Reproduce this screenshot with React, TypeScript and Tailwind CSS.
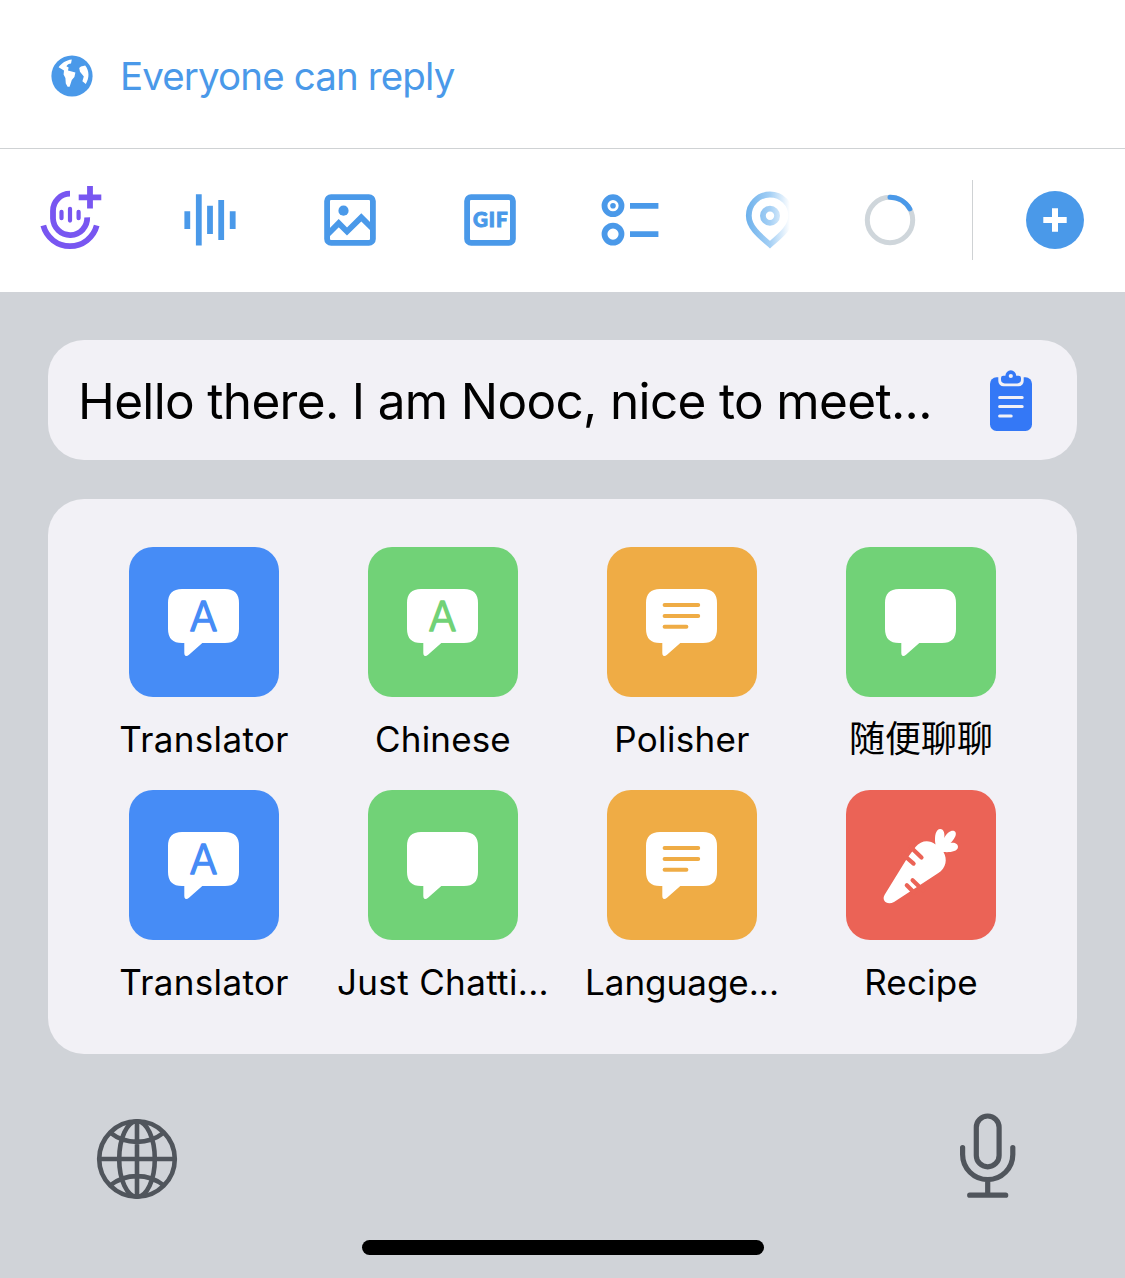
import type { ReactNode } from "react";

const BLUE = "#4A99E9";

function ToolIcon({ children }: { children: ReactNode }) {
  return (
    <svg width="80" height="80" viewBox="-40 -40 80 80" fill="none" stroke={BLUE} strokeWidth="5.8">
      {children}
    </svg>
  );
}

function EarthIcon() {
  return (
    <svg width="42" height="42" viewBox="0 0 42 42">
      <circle cx="21" cy="21" r="20.6" fill={BLUE} />
      <path
        fill="#fff"
        d="M7.6 12.2C10.5 8 15 5 20.8 4.4L20 8.4C18 8.6 16.2 9.4 15.4 11.2L17.6 12.6L17 15.4L24.4 17.6L23.4 22L20.8 25L18.6 31.8H16.6L14.8 28.6L14.4 23L12.6 19.4L13 15.6Z"
      />
      <path
        fill="#fff"
        d="M28.2 13L30 11.4L34.2 10.6C38.4 16 38.6 23 34.8 29L31.4 26.2L32.8 21.4L29 16.7Z"
      />
    </svg>
  );
}

function SpacesIcon() {
  return (
    <ToolIcon>
      <g stroke="#7856F1">
        <path d="M-26.7 5.6A27.6 27.6 0 0 0 26.7 5.6" />
        <path d="M0 -26.3A17 17 0 0 0 -17 -9.3V-1.5A17 17 0 0 0 17.2 -2.6" />
        <path d="M20 -34V-11.4M8.7 -22.7H31.3" />
        <path d="M-8.5 -8.2V-1.8M0 -11.2V0.6M8.6 -8.2V-1.8" strokeWidth="4.2" strokeLinecap="round" />
      </g>
    </ToolIcon>
  );
}

function WaveIcon() {
  return (
    <ToolIcon>
      <path d="M-22.7 -8.7V8.9M-11.2 -25.8V25.6M0 -14.2V14M11.2 -20V20M22.7 -8.7V8.9" />
    </ToolIcon>
  );
}

function ImageIcon() {
  return (
    <ToolIcon>
      <rect x="-22.9" y="-22.9" width="45.8" height="45.8" rx="4" />
      <circle cx="-6.5" cy="-9.3" r="5.1" fill={BLUE} stroke="none" />
      <path d="M-22 14L-11.3 3.2L-3 11.5L11.3 -2.6L22 8" />
    </ToolIcon>
  );
}

function GifIcon() {
  return (
    <ToolIcon>
      <rect x="-22.9" y="-22.9" width="45.8" height="45.8" rx="4" />
      <text
        x="-17"
        y="7.4"
        textLength="34.5"
        fill={BLUE}
        stroke={BLUE}
        strokeWidth="1"
        className="font-['Lato'] text-[20.5px] font-black"
      >
        GIF
      </text>
    </ToolIcon>
  );
}

function PollIcon() {
  return (
    <ToolIcon>
      <circle cx="-17" cy="-14.3" r="8.5" />
      <circle cx="-17" cy="-14.3" r="2.8" fill={BLUE} stroke="none" />
      <circle cx="-17" cy="14.1" r="8.5" />
      <path d="M0 -14.2H28.4M0 14.1H28.4" />
    </ToolIcon>
  );
}

function PinIcon() {
  return (
    <ToolIcon>
      <defs>
        <linearGradient id="pinFade" gradientUnits="userSpaceOnUse" x1="-24" y1="0" x2="20" y2="0">
          <stop offset="0" stopColor="#6DB1EC" />
          <stop offset="0.55" stopColor="#A5D0F5" />
          <stop offset="1" stopColor="#FFFFFF" />
        </linearGradient>
      </defs>
      <g stroke="url(#pinFade)">
        <path d="M0 24.6C-12 14.5 -21.2 6.5 -21.2 -4.3A21.2 21.2 0 0 1 21.2 -4.3C21.2 6.5 12 14.5 0 24.6Z" />
        <circle cx="0" cy="-4.3" r="7.1" />
      </g>
    </ToolIcon>
  );
}

function ProgressRing() {
  return (
    <ToolIcon>
      <circle r="22.7" stroke="#CFD6DB" strokeWidth="5" />
      <path d="M0 -22.7A22.7 22.7 0 0 1 19.8 -11.1" strokeWidth="5" strokeLinecap="round" />
    </ToolIcon>
  );
}

function ClipboardIcon() {
  return (
    <svg width="42" height="62" viewBox="0 0 42 62">
      <rect y="7.3" width="42" height="53.7" rx="6.5" fill="#3478F6" />
      <path d="M8.3 4H33.7V11A5.2 5.2 0 0 1 28.5 16.2H13.5A5.2 5.2 0 0 1 8.3 11Z" fill="#F2F1F6" />
      <path
        d="M13.2 5.7H15.4A5.4 5.4 0 0 1 26.2 5.7H28.6Q31 5.7 31 8.1V9.6Q31 13.4 27.2 13.4H14.8Q11 13.4 11 9.6V8.1Q11 5.7 13.2 5.7Z"
        fill="#3478F6"
      />
      <circle cx="20.8" cy="6" r="2.1" fill="#F2F1F6" />
      <path d="M9.6 27.4H32.2M9.6 36.5H32.2M9.6 46H21.2" stroke="#F2F1F6" strokeWidth="3" strokeLinecap="round" />
    </svg>
  );
}

function Bubble({ children }: { children?: ReactNode }) {
  return (
    <svg width="150" height="150" viewBox="0 0 150 150">
      <path
        fill="#fff"
        d="M53 42H96Q110 42 110 56V82Q110 96 96 96H73.3L60 107.8Q57.8 109.6 56.4 108.8Q55.3 108 55.3 106V96H53Q39 96 39 82V56Q39 42 53 42Z"
      />
      {children}
    </svg>
  );
}

function LetterBubble({ color }: { color: string }) {
  return (
    <Bubble>
      <text
        x="74.5"
        y="84.2"
        textAnchor="middle"
        fill={color}
        stroke={color}
        strokeWidth="1.5"
        strokeLinejoin="round"
        className="font-['Inter'] text-[41.5px] font-light"
      >
        A
      </text>
    </Bubble>
  );
}

function LinesBubble() {
  return (
    <Bubble>
      <path d="M57.6 58H91.2M57.6 69H91.2M57.6 79.8H79.4" stroke="#EFAC45" strokeWidth="4" strokeLinecap="round" />
    </Bubble>
  );
}

function CarrotIcon() {
  return (
    <svg width="150" height="150" viewBox="0 0 150 150">
      <path
        fill="#fff"
        d="M38.8 104.5L61 68.5L69.5 57C75 50.5 83 49.5 89.5 54.5C88 46 90 39 94.2 39C98 39 99 44 98.2 48C102 40.5 107.5 39.5 109.4 42C111 45 108 49.5 104.5 53C109 52.2 112 54 112 57C111.5 62 103 62.5 97.5 62C101.5 69 100.5 78 92 83.3L48 112C41 115.5 35 110.5 38.8 104.5Z"
      />
      <path
        d="M57 64.5L67.6 73.6M65 57.5L75.5 67.6M60.8 95.2L68 102.5M66.6 90.2L77 100.2"
        stroke="#EB6356"
        strokeWidth="4.2"
        strokeLinecap="round"
      />
    </svg>
  );
}

function GlobeIcon() {
  return (
    <svg width="82" height="82" viewBox="-41 -41 82 82" fill="none" stroke="#50555C" strokeWidth="4.6">
      <circle r="37.8" />
      <ellipse rx="17.8" ry="37.8" />
      <path d="M0 -38V38M-38 0H38M-27 -26.5A43.5 43.5 0 0 0 27 -26.5M-27 26.5A43.5 43.5 0 0 1 27 26.5" />
    </svg>
  );
}

function MicIcon() {
  return (
    <svg width="56" height="86" viewBox="-27.7 0 56 86" fill="none" stroke="#50555C" strokeWidth="5.2" strokeLinecap="round">
      <rect x="-11.4" y="3" width="22.8" height="50.8" rx="11.4" />
      <path d="M-25.1 34.5V41.5A25.1 25.1 0 0 0 25.1 41.5V34.5M0 67V82M-18 82.2H18" />
    </svg>
  );
}

const apps: { label: string; bg: string; icon: ReactNode; text: string }[] = [
  { label: "Translator", bg: "bg-[#468CF6]", icon: <LetterBubble color="#468CF6" />, text: "text-[35px] tracking-[0.35px]" },
  { label: "Chinese", bg: "bg-[#71D277]", icon: <LetterBubble color="#71D277" />, text: "text-[35px] tracking-[0.15px]" },
  { label: "Polisher", bg: "bg-[#EFAC45]", icon: <LinesBubble />, text: "text-[35px] tracking-[0.3px]" },
  { label: "随便聊聊", bg: "bg-[#71D277]", icon: <Bubble />, text: "text-[36px]" },
  { label: "Translator", bg: "bg-[#468CF6]", icon: <LetterBubble color="#468CF6" />, text: "text-[35px] tracking-[0.35px]" },
  { label: "Just Chatti...", bg: "bg-[#71D277]", icon: <Bubble />, text: "text-[35px] tracking-[0.35px]" },
  { label: "Language...", bg: "bg-[#EFAC45]", icon: <LinesBubble />, text: "text-[35px]" },
  { label: "Recipe", bg: "bg-[#EB6356]", icon: <CarrotIcon />, text: "text-[35px] tracking-[0.15px]" },
];

const tools = [SpacesIcon, WaveIcon, ImageIcon, GifIcon, PollIcon, PinIcon];

export default function App() {
  return (
    <div className="flex h-[1278px] w-[1125px] flex-col overflow-hidden bg-[#D0D3D8] font-['Inter','Noto_Sans_CJK_SC',sans-serif] text-black">
      <div className="flex h-[149px] items-center gap-[27px] border-b border-[#CFD2D4] bg-white pt-[4px] pl-[51px]">
        <EarthIcon />
        <span className="text-[38.5px] leading-[50px] tracking-[-0.87px] whitespace-nowrap text-[#4A99E9]">
          Everyone can reply
        </span>
      </div>
      <div className="flex h-[143px] items-center bg-white pb-[1px]">
        {tools.map((Icon, i) => (
          <div key={i} className="flex w-[140px] justify-center">
            <Icon />
          </div>
        ))}
        <div className="ml-[10px] w-[80px]">
          <ProgressRing />
        </div>
        <div className="ml-[42px] h-[80px] w-px bg-[#CFD2D4]" />
        <div className="ml-[53px] flex size-[58px] items-center justify-center rounded-full bg-[#4A99E9]">
          <svg width="24" height="24" viewBox="-12 -12 24 24" stroke="#fff" strokeWidth="6">
            <path d="M0 -11.7V11.7M-11.7 0H11.7" />
          </svg>
        </div>
      </div>
      <div className="mx-12 mt-12 flex h-[120px] items-center justify-between rounded-[36px] bg-[#F2F1F6] pt-[2px] pr-[45px] pl-[30px]">
        <span className="text-[49.5px] leading-[60px] tracking-[-0.66px] whitespace-nowrap">
          Hello there. I am Nooc, nice to meet...
        </span>
        <ClipboardIcon />
      </div>
      <div className="mx-12 mt-[39px] grid h-[555px] grid-cols-[repeat(4,239px)] grid-rows-[243px_243px] content-start justify-center rounded-[36px] bg-[#F2F1F6] pt-12">
        {apps.map((app, i) => (
          <div key={i} className="flex flex-col items-center">
            <div className={`size-[150px] overflow-hidden rounded-[24px] ${app.bg}`}>{app.icon}</div>
            <span className={`mt-[19px] leading-[46px] whitespace-nowrap ${app.text}`}>{app.label}</span>
          </div>
        ))}
      </div>
      <div className="mt-[59px] flex items-start justify-between pr-[109px] pl-[96px]">
        <div className="pt-[5px]">
          <GlobeIcon />
        </div>
        <MicIcon />
      </div>
      <div className="mt-auto mb-[23px] ml-[362px] h-[15px] w-[402px] rounded-full bg-black" />
    </div>
  );
}
